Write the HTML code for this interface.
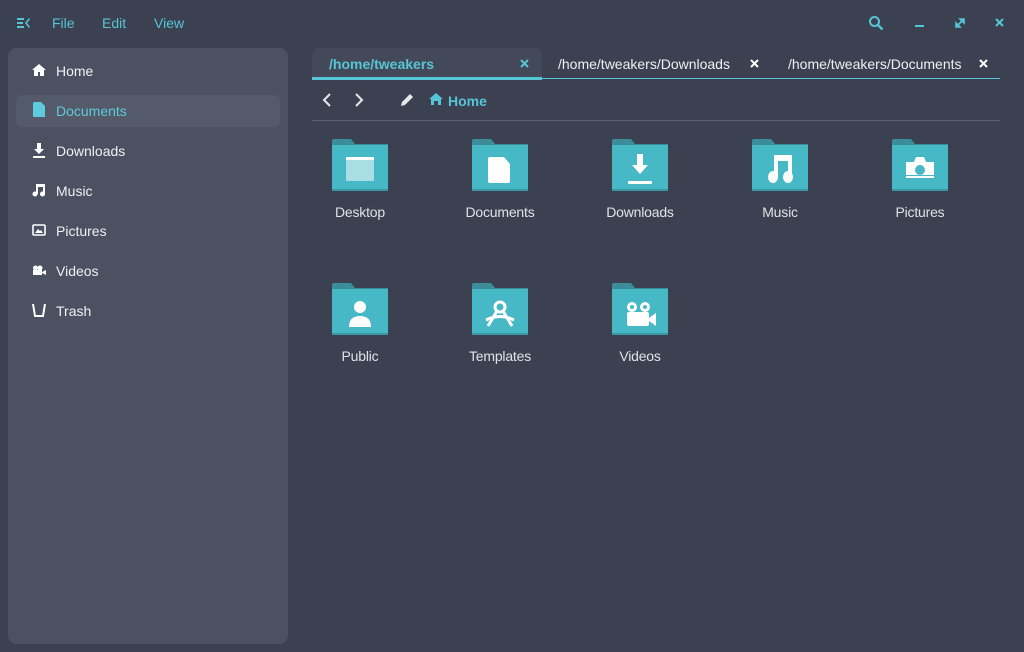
<!DOCTYPE html>
<html><head><meta charset="utf-8"><style>
*{margin:0;padding:0;box-sizing:border-box}
body{width:1024px;height:652px;background:#3b4150;font-family:"Liberation Sans","DejaVu Sans",sans-serif;font-size:14px;color:#e6e8ec;position:relative;overflow:hidden;border-radius:8px}
.a{position:absolute}
.menu{color:#56c5d5;top:15px;font-size:14px}
.side{left:8px;top:48px;width:280px;height:596px;background:#4b5161;border-radius:9px}
.item{position:absolute;left:8px;width:264px;height:32px;border-radius:6px}
.item span{position:absolute;left:40px;top:8px;color:#eef0f2}
.item svg{position:absolute;left:16px;top:8px}
.act{background:#545a69}
.act span{color:#5ccbdb}
.lbl{width:140px;text-align:center;color:#dfe2e7;font-size:14px;letter-spacing:-0.2px}
.tab{top:48px;height:30px;font-size:14px;white-space:nowrap;overflow:hidden}
</style></head><body>
<svg class="a" style="left:17px;top:17px" width="13" height="12" viewBox="0 0 13 12"><g fill="#56c5d5"><rect x="0" y="1" width="7" height="2"/><rect x="0" y="5" width="6" height="2"/><rect x="0" y="9" width="7" height="2"/><path d="M12 1 L8 6 L12 11 L13 10 L10 6 L13 2Z"/></g></svg>
<div class="a menu" style="left:52px">File</div>
<div class="a menu" style="left:102px">Edit</div>
<div class="a menu" style="left:154px">View</div>
<svg class="a" style="left:868px;top:15px" width="16" height="16" viewBox="0 0 16 16"><circle cx="6.5" cy="6.5" r="4.5" fill="none" stroke="#56c5d5" stroke-width="2"/><path d="M10 10 L14.5 14.5" stroke="#56c5d5" stroke-width="2.4"/></svg>
<div class="a" style="left:915px;top:25px;width:9px;height:2px;background:#56c5d5"></div>
<svg class="a" style="left:955px;top:18px" width="10" height="10" viewBox="0 0 10 10"><path d="M5 1H9V5Z M5 9H1V5Z M8 2L2 8" stroke="#56c5d5" stroke-width="1.6" fill="#56c5d5"/></svg>
<svg class="a" style="left:995px;top:18px" width="9" height="9" viewBox="0 0 9 9"><path d="M1 1L8 8M8 1L1 8" stroke="#56c5d5" stroke-width="2"/></svg>

<div class="a side">
 <div class="item" style="top:7px"><svg width="14" height="14" viewBox="0 0 14 14"><path d="M7 1L0 7H2V13H6V9H8V13H12V7H14Z" fill="#fff"/></svg><span>Home</span></div>
 <div class="item act" style="top:47px"><svg width="14" height="16" viewBox="0 0 14 16" style="top:7px"><path d="M2 0H9L13 4V15H1V1Z" fill="#5ccbdb"/></svg><span>Documents</span></div>
 <div class="item" style="top:87px"><svg width="14" height="15" viewBox="0 0 14 15"><path d="M5 0H9V6H12L7 11L2 6H5Z" fill="#fff"/><rect x="1" y="13" width="12" height="2" fill="#fff"/></svg><span>Downloads</span></div>
 <div class="item" style="top:127px"><svg width="14" height="14" viewBox="0 0 14 14"><path d="M4 1H13V11H11V4H6V11H4Z" fill="#fff"/><circle cx="3" cy="11" r="2.5" fill="#fff"/><circle cx="10.5" cy="11" r="2.5" fill="#fff"/></svg><span>Music</span></div>
 <div class="item" style="top:167px"><svg width="14" height="14" viewBox="0 0 14 14"><rect x="1" y="2" width="12" height="10" rx="1" fill="none" stroke="#fff" stroke-width="1.6"/><path d="M3 10L6 6L8 8L9 7L11 10Z" fill="#fff"/></svg><span>Pictures</span></div>
 <div class="item" style="top:207px"><svg width="14" height="14" viewBox="0 0 14 14"><circle cx="3.5" cy="5" r="2.5" fill="#fff"/><circle cx="8" cy="5" r="2.5" fill="#fff"/><rect x="1" y="7" width="9" height="5" fill="#fff"/><path d="M10 9L14 7V12L10 10Z" fill="#fff"/></svg><span>Videos</span></div>
 <div class="item" style="top:247px"><svg width="14" height="14" viewBox="0 0 14 14"><path d="M1 1L3 13H11L13 1" fill="none" stroke="#fff" stroke-width="2"/></svg><span>Trash</span></div>
</div>

<div class="a" style="left:312px;top:48px;width:230px;height:30px;background:#434958;border-radius:8px 8px 0 0"></div>
<div class="a tab" style="left:329px;top:56px;color:#56c5d5;font-weight:bold">/home/tweakers</div>
<svg class="a" style="left:520px;top:59px" width="9" height="9" viewBox="0 0 9 9"><path d="M1 1L8 8M8 1L1 8" stroke="#56c5d5" stroke-width="2"/></svg>
<div class="a tab" style="left:558px;top:56px;width:180px;color:#eef0f2">/home/tweakers/Downloads</div>
<svg class="a" style="left:750px;top:59px" width="9" height="9" viewBox="0 0 9 9"><path d="M1 1L8 8M8 1L1 8" stroke="#fff" stroke-width="2"/></svg>
<div class="a tab" style="left:788px;top:56px;width:178px;color:#eef0f2">/home/tweakers/Documents</div>
<svg class="a" style="left:979px;top:59px" width="9" height="9" viewBox="0 0 9 9"><path d="M1 1L8 8M8 1L1 8" stroke="#fff" stroke-width="2"/></svg>
<div class="a" style="left:312px;top:77px;width:230px;height:3px;background:#56c5d5"></div>
<div class="a" style="left:542px;top:78px;width:458px;height:1px;background:#56c5d5"></div>

<svg class="a" style="left:322px;top:93px" width="10" height="14" viewBox="0 0 10 14"><path d="M8 1L2 7L8 13" fill="none" stroke="#e6e8ec" stroke-width="2"/></svg>
<svg class="a" style="left:354px;top:93px" width="10" height="14" viewBox="0 0 10 14"><path d="M2 1L8 7L2 13" fill="none" stroke="#e6e8ec" stroke-width="2"/></svg>
<svg class="a" style="left:400px;top:92px" width="15" height="15" viewBox="0 0 15 15"><path d="M1 14L2 10L10 2L13 5L5 13Z" fill="#e6e8ec"/></svg>
<svg class="a" style="left:429px;top:93px" width="14" height="13" viewBox="0 0 14 13"><path d="M7 0L0 6H2V12H5V8H9V12H12V6H14Z" fill="#56c5d5"/></svg>
<div class="a" style="left:448px;top:93px;color:#56c5d5;font-weight:bold">Home</div>
<div class="a" style="left:312px;top:120px;width:688px;height:1px;background:#5a6070"></div>

<svg width="0" height="0" style="position:absolute"><defs>
<g id="f"><path d="M0 2Q0 0 2 0H19L23 5H56V52H0Z" fill="#3a8d99"/><rect x="0" y="6" width="56" height="46" rx="1" fill="#47b8c6"/><rect x="0" y="50" width="56" height="2" fill="#3a97a4"/></g>
</defs></svg>

<svg class="a" style="left:332px;top:139px" width="56" height="52"><use href="#f"/><rect x="14" y="18" width="28" height="24" rx="1" fill="#a9dfe4"/><rect x="14" y="18" width="28" height="3" fill="#fff"/></svg>
<svg class="a" style="left:472px;top:139px" width="56" height="52"><use href="#f"/><path d="M18 18H32L38 25V42Q38 44 36 44H18Q16 44 16 42V20Q16 18 18 18Z" fill="#fff"/></svg>
<svg class="a" style="left:612px;top:139px" width="56" height="52"><use href="#f"/><path d="M25 15H31V26H36L28 35L20 26H25Z" fill="#fff"/><rect x="16" y="42" width="24" height="3" rx="1" fill="#fff"/></svg>
<svg class="a" style="left:752px;top:139px" width="56" height="52"><use href="#f"/><path d="M22 16H40V38H36V22H26V38H22Z" fill="#fff"/><ellipse cx="21" cy="38" rx="5" ry="6" fill="#fff"/><ellipse cx="36" cy="38" rx="5" ry="6" fill="#fff"/></svg>
<svg class="a" style="left:892px;top:139px" width="56" height="52"><use href="#f"/><path d="M14 23H22L24 18H32L34 23H42V39H14Z" fill="#fff"/><circle cx="28" cy="31" r="5" fill="#47b8c6"/><rect x="14" y="36" width="28" height="1" fill="#47b8c6"/></svg>
<svg class="a" style="left:332px;top:283px" width="56" height="52"><use href="#f"/><circle cx="28" cy="24" r="6" fill="#fff"/><path d="M17 44Q17 33 28 33Q39 33 39 44Z" fill="#fff"/></svg>
<svg class="a" style="left:472px;top:283px" width="56" height="52"><use href="#f"/><circle cx="28" cy="24" r="5" fill="none" stroke="#fff" stroke-width="3"/><path d="M25 28L16 43M31 28L40 43M14 37Q28 30 42 37" fill="none" stroke="#fff" stroke-width="3"/></svg>
<svg class="a" style="left:612px;top:283px" width="56" height="52"><use href="#f"/><circle cx="20" cy="24" r="5" fill="#fff"/><circle cx="33" cy="24" r="5" fill="#fff"/><circle cx="20" cy="24" r="2" fill="#47b8c6"/><circle cx="33" cy="24" r="2" fill="#47b8c6"/><rect x="15" y="29" width="22" height="14" rx="2" fill="#fff"/><path d="M37 35L44 30V43L37 38Z" fill="#fff"/></svg>

<div class="a lbl" style="left:290px;top:204px">Desktop</div>
<div class="a lbl" style="left:430px;top:204px">Documents</div>
<div class="a lbl" style="left:570px;top:204px">Downloads</div>
<div class="a lbl" style="left:710px;top:204px">Music</div>
<div class="a lbl" style="left:850px;top:204px">Pictures</div>
<div class="a lbl" style="left:290px;top:348px">Public</div>
<div class="a lbl" style="left:430px;top:348px">Templates</div>
<div class="a lbl" style="left:570px;top:348px">Videos</div>
</body></html>
